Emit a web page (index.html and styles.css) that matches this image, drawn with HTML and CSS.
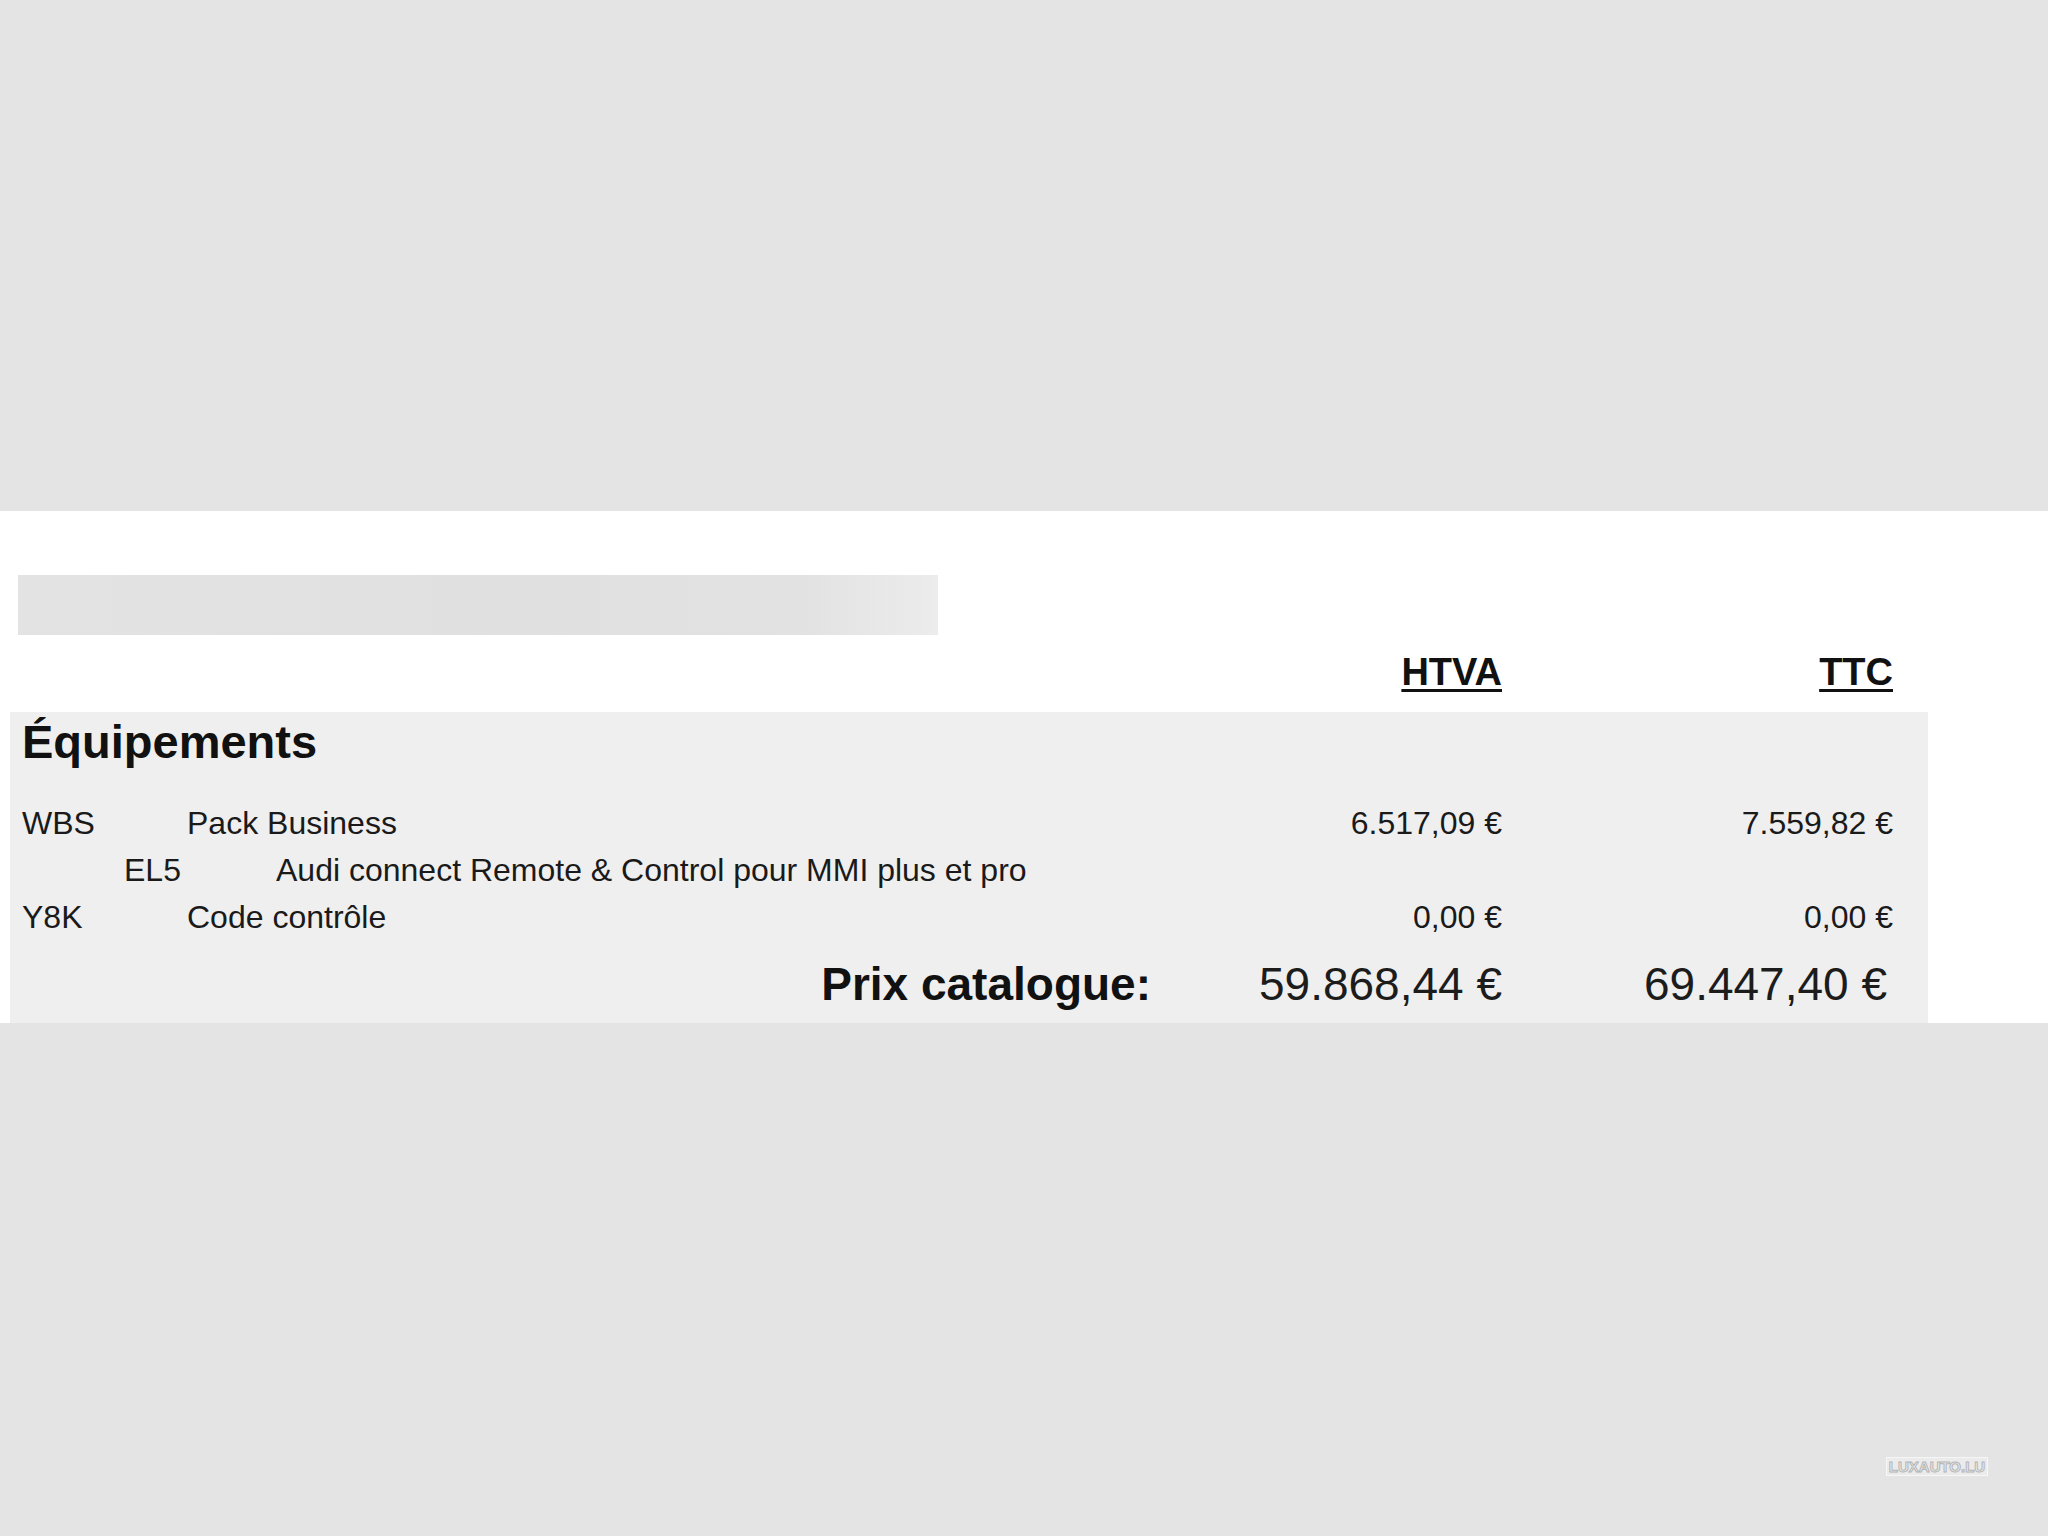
FILE: index.html
```html
<!DOCTYPE html>
<html lang="fr">

<head>
    <meta charset="UTF-8">
    <meta name="viewport" content="width=device-width, initial-scale=1.0">
    <title>Équipements - Prix catalogue</title>
    <link rel="stylesheet" href="styles.css">
</head>

<body>
    <div class="band"></div>

    <section class="sheet">
        <div class="redacted"></div>

        <div class="cols head">
            <span></span>
            <span></span>
            <span class="amt">HTVA</span>
            <span class="amt">TTC</span>
        </div>

        <div class="equip">
            <h2>Équipements</h2>

            <div class="cols row">
                <span>WBS</span>
                <span>Pack Business</span>
                <span class="amt">6.517,09 €</span>
                <span class="amt">7.559,82 €</span>
            </div>
            <div class="cols row sub">
                <span>EL5</span>
                <span>Audi connect Remote &amp; Control pour MMI plus et pro</span>
                <span class="amt"></span>
                <span class="amt"></span>
            </div>
            <div class="cols row">
                <span>Y8K</span>
                <span>Code contrôle</span>
                <span class="amt">0,00 €</span>
                <span class="amt">0,00 €</span>
            </div>

            <div class="total">
                <span class="total-label">Prix catalogue:</span>
                <span class="amt">59.868,44 €</span>
                <span class="amt last">69.447,40 €</span>
            </div>
        </div>
    </section>

    <div class="band bottom"></div>

    <div class="watermark">LUXAUTO.LU</div>
</body>

</html>
```

FILE: styles.css
```css
body {
    margin: 0;
    min-height: 1536px;
    display: flex;
    flex-direction: column;
    font-family: 'Liberation Sans', Arial, sans-serif;
    background-color: #e4e4e4;
    color: #1c1c1c;
    position: relative;
}

.band {
    height: 511px;
    background-color: #e4e4e4;
}

.band.bottom {
    height: auto;
    flex: 1;
}

.sheet {
    background-color: #ffffff;
    padding-top: 64px;
}

.redacted {
    margin-left: 18px;
    width: 920px;
    height: 60px;
    background: linear-gradient(90deg, #e3e3e3 0%, #e0e0e0 55%, #e2e2e2 85%, #ececec 100%);
}

.cols {
    display: grid;
    grid-template-columns: 165px 1fr 300px 391px;
    align-items: baseline;
}

.amt {
    text-align: right;
}

.head {
    margin: 14px 0 17px 10px;
    width: 1918px;
    box-sizing: border-box;
    padding: 0 35px 0 12px;
    font-size: 38px;
    line-height: 46px;
    font-weight: bold;
    color: #111;
}

.head .amt {
    text-decoration: underline;
    text-decoration-thickness: 3px;
    text-underline-offset: 4px;
}

.equip {
    margin-left: 10px;
    width: 1918px;
    box-sizing: border-box;
    padding: 2px 35px 11px 12px;
    background-color: #efefef;
}

.equip h2 {
    margin: 0 0 30px 0;
    font-size: 47px;
    line-height: 56px;
    font-weight: bold;
    color: #111;
}

.row {
    font-size: 32px;
    line-height: 47px;
    color: #1a1a1a;
}

.row.sub {
    grid-template-columns: 102px 152px 1fr 300px 391px;
}

.row.sub::before {
    content: '';
}

.total {
    display: grid;
    grid-template-columns: 1fr 351px 391px;
    align-items: baseline;
    margin-top: 15px;
    font-size: 46px;
    line-height: 56px;
    color: #1c1c1c;
}

.total-label {
    text-align: right;
    font-weight: bold;
    color: #111;
}

.total .last {
    padding-right: 6px;
}

.watermark {
    position: absolute;
    left: 1886px;
    top: 1457px;
    width: 102px;
    height: 19px;
    box-sizing: border-box;
    border: 1px solid #f6f6f6;
    background-color: #ebebeb;
    font-size: 15px;
    line-height: 17px;
    font-weight: bold;
    text-align: center;
    color: #ececec;
    -webkit-text-stroke: 1px #b5b5b5;
}
```
